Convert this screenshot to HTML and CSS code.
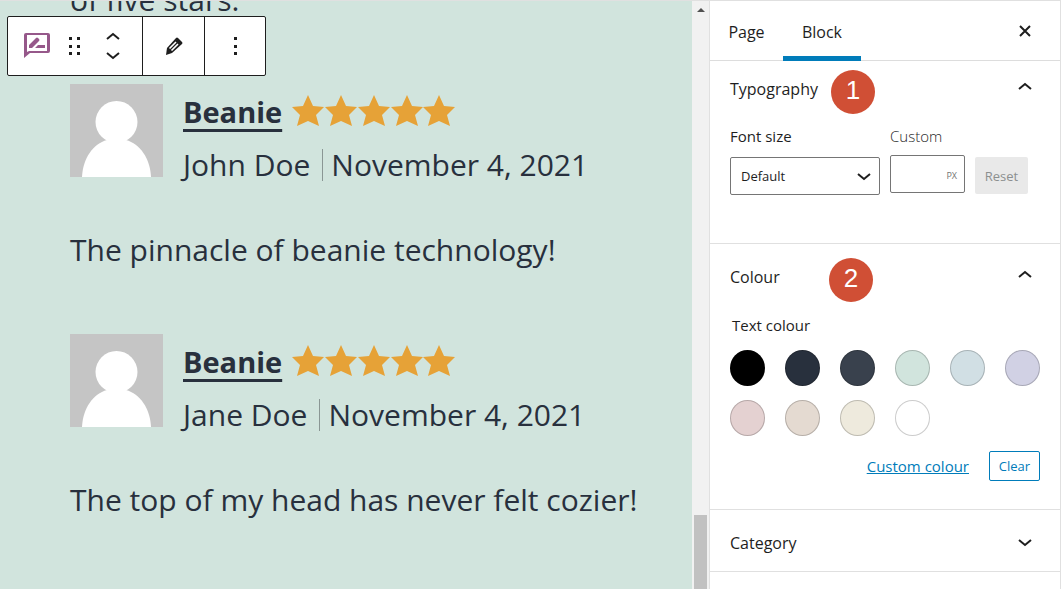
FILE: index.html
```html
<!DOCTYPE html>
<html lang="en">
<head>
  <meta charset="UTF-8">
  <meta name="viewport" content="width=device-width, initial-scale=1">
  <title>Edit Page</title>
  <link rel="stylesheet" href="styles.css">
</head>
<body>
  <!-- shared shapes -->
  <svg class="defs" width="0" height="0" aria-hidden="true">
    <symbol id="stars" viewBox="0 0 164 32">
      <path id="star" fill="#e6a237" d="M16 0l5 11 11 1-8 8 3 11-11-5-11 5 3-11-8-8 11-1z"/>
      <use href="#star" x="33"/>
      <use href="#star" x="66"/>
      <use href="#star" x="99"/>
      <use href="#star" x="131"/>
    </symbol>
    <symbol id="person" viewBox="0 0 93 93">
      <rect width="93" height="93" fill="#c5c5c5"/>
      <circle cx="46.500" cy="38" r="21" fill="#fff"/>
      <path fill="#fff" d="M12 93C13 74 23 60 37 56h19c14 4 24 18 25 37z"/>
    </symbol>
    <symbol id="up" viewBox="0 0 14 8">
      <path d="M1 7l6-5 6 5" fill="none" stroke="#1e1e1e" stroke-width="2"/>
    </symbol>
    <symbol id="down" viewBox="0 0 14 8">
      <path d="M1 1l6 5 6-5" fill="none" stroke="#1e1e1e" stroke-width="2"/>
    </symbol>
  </svg>

  <div class="editor">
    <main class="canvas">
      <div class="toolbar" role="toolbar" aria-label="Block tools">
        <div class="toolbar-group group-main">
          <button aria-label="Reviews by Category">
            <svg width="26" height="26" viewBox="0 0 26 26">
              <path fill="#96588a" fill-rule="evenodd" d="M2 0h22q2 0 2 2v16q0 2-2 2H6l-6 5V2q0-2 2-2zM3 2v17l2-1h18V2z"/>
              <path fill="#96588a" d="M5 15v-3l7-7q1-1 2 0l1 1q1 1 0 2l-7 7zM14 12h7v3H11z"/>
            </svg>
          </button>
          <button aria-label="Drag">
            <svg width="12" height="20" viewBox="0 0 12 20" fill="#1e1e1e">
              <path d="M0 1h3v3H0zM8 1h3v3H8zM0 9h3v3H0zM8 9h3v3H8zM0 16h3v3H0zM8 16h3v3H8z"/>
            </svg>
          </button>
          <div class="movers">
            <button aria-label="Move up"><svg width="14" height="8"><use href="#up"/></svg></button>
            <button aria-label="Move down"><svg width="14" height="8"><use href="#down"/></svg></button>
          </div>
        </div>
        <div class="toolbar-group group-edit">
          <button aria-label="Edit">
            <svg width="18" height="18" viewBox="0 0 18 18">
              <path fill="#1e1e1e" d="M11 1q1-1 2 0l4 4q1 1 0 2L7 16l-6 2 1-7z"/>
              <path d="M4.500 11.500l6.500-6.500M6.500 13.500l6.500-6.500" stroke="#fff" stroke-width="1.600"/>
            </svg>
          </button>
        </div>
        <div class="toolbar-group group-more">
          <button aria-label="Options">
            <svg width="3" height="20" viewBox="0 0 3 20"><path fill="#1e1e1e" d="M0 1h3v3H0zM0 9h3v3H0zM0 16h3v3H0z"/></svg>
          </button>
        </div>
      </div>

      <div class="reviews">
        <article class="review">
          <p>of five stars.</p>
        </article>
        <article class="review">
          <header>
            <svg class="avatar" role="img" aria-label="John Doe"><use href="#person"/></svg>
            <div class="info">
              <div class="product"><a href="#">Beanie</a><svg class="stars" role="img" aria-label="Rated 5 out of 5"><use href="#stars"/></svg></div>
              <div class="meta"><span class="author">John Doe</span><time datetime="2021-11-04">November 4, 2021</time></div>
            </div>
          </header>
          <p>The pinnacle of beanie technology!</p>
        </article>
        <article class="review">
          <header>
            <svg class="avatar" role="img" aria-label="Jane Doe"><use href="#person"/></svg>
            <div class="info">
              <div class="product"><a href="#">Beanie</a><svg class="stars" role="img" aria-label="Rated 5 out of 5"><use href="#stars"/></svg></div>
              <div class="meta"><span class="author">Jane Doe</span><time datetime="2021-11-04">November 4, 2021</time></div>
            </div>
          </header>
          <p>The top of my head has never felt cozier!</p>
        </article>
      </div>
    </main>

    <div class="scrollbar">
      <svg width="8" height="4" viewBox="0 0 8 4"><path fill="#505050" d="M4 0l4 4H0z"/></svg>
      <div class="thumb"></div>
    </div>

    <aside class="sidebar">
      <nav class="tabs">
        <button class="tab">Page</button>
        <button class="tab active">Block</button>
        <button class="close" aria-label="Close settings">
          <svg width="12" height="12" viewBox="0 0 12 12"><path d="M1 1l10 10M11 1L1 11" stroke="#1e1e1e" stroke-width="2"/></svg>
        </button>
      </nav>

      <section class="panel typography">
        <h2><button class="panel-title">Typography <svg width="14" height="8"><use href="#up"/></svg></button></h2>
        <span class="step">1</span>
        <div class="font-row">
          <div class="field field-size">
            <label for="fontSize">Font size</label>
            <div class="select">
              <select id="fontSize">
                <option>Default</option>
                <option>Small</option>
                <option>Large</option>
              </select>
              <svg width="14" height="8"><use href="#down"/></svg>
            </div>
          </div>
          <div class="field field-custom">
            <label for="customSize">Custom</label>
            <div class="unit"><input type="text" id="customSize"><span>PX</span></div>
          </div>
          <button class="reset" disabled>Reset</button>
        </div>
      </section>

      <section class="panel colour">
        <h2><button class="panel-title">Colour <svg width="14" height="8"><use href="#up"/></svg></button></h2>
        <span class="step">2</span>
        <h3>Text colour</h3>
        <div class="swatches">
          <button class="swatch black" aria-label="Black"></button>
          <button class="swatch navy" aria-label="Dark gray"></button>
          <button class="swatch slate" aria-label="Gray"></button>
          <button class="swatch green" aria-label="Green"></button>
          <button class="swatch blue" aria-label="Blue"></button>
          <button class="swatch purple" aria-label="Purple"></button>
          <button class="swatch red" aria-label="Red"></button>
          <button class="swatch orange" aria-label="Orange"></button>
          <button class="swatch yellow" aria-label="Yellow"></button>
          <button class="swatch white" aria-label="White"></button>
        </div>
        <div class="actions">
          <a href="#">Custom colour</a>
          <button class="clear">Clear</button>
        </div>
      </section>

      <section class="panel">
        <h2><button class="panel-title">Category <svg width="14" height="8"><use href="#down"/></svg></button></h2>
      </section>
    </aside>
  </div>
</body>
</html>
```
FILE: styles.css
```css
* {
  box-sizing: border-box;
}
body {
  margin: 0;
  background: #fff;
  color: #1e1e1e;
  font-family: "Open Sans", "Noto Sans", sans-serif;
  font-size: 15px;
}
button, input, select {
  font-family: inherit;
  color: inherit;
}
button {
  padding: 0;
  border: 0;
  background: none;
}
svg {
  display: block;
}
.defs {
  position: absolute;
}
.editor {
  display: flex;
  height: 100vh;
  border-top: 1px solid #e0e0e0;
  overflow: hidden;
}

/* canvas */
.canvas {
  position: relative;
  flex: 1;
  min-width: 0;
  background: #d1e4dd;
  overflow: hidden;
}
.toolbar {
  position: absolute;
  top: 15px;
  left: 7px;
  display: flex;
  height: 60px;
  background: #fff;
  border: 1px solid #1e1e1e;
  border-radius: 2px;
}
.toolbar-group {
  display: flex;
  align-items: center;
  justify-content: center;
}
.toolbar-group + .toolbar-group {
  border-left: 1px solid #1e1e1e;
}
.group-main {
  width: 134px;
  gap: 19px;
  padding-right: 6px;
}
.group-edit {
  width: 62px;
}
.group-more {
  width: 61px;
}
.movers {
  display: flex;
  flex-direction: column;
  gap: 12px;
  margin-left: 6px;
}
.reviews {
  margin-top: -27px;
  padding: 0 20px 0 70px;
  color: #28303d;
  font-size: 30px;
  line-height: 52px;
}
.review {
  margin-bottom: 58px;
}
.review header {
  display: flex;
  gap: 20px;
  margin-bottom: 33px;
}
.review p {
  margin: 0;
  white-space: nowrap;
}
.avatar {
  width: 93px;
  height: 93px;
  flex: none;
}
.info {
  padding-top: 2px;
  white-space: nowrap;
}
.product {
  display: flex;
  align-items: center;
  gap: 10px;
}
.product a {
  color: inherit;
  font-size: 29px;
  font-weight: 700;
  text-decoration: underline;
  text-decoration-thickness: 3px;
  text-underline-offset: 6px;
  text-decoration-skip-ink: none;
}
.stars {
  width: 164px;
  height: 32px;
  margin-bottom: 2px;
}
.meta {
  display: flex;
  align-items: center;
  padding-top: 1px;
}
.meta time {
  margin-left: 12px;
  padding-left: 8px;
  border-left: 1px solid #8a9694;
  line-height: 32px;
}

/* scrollbar */
.scrollbar {
  display: flex;
  flex-direction: column;
  justify-content: space-between;
  align-items: center;
  width: 17px;
  padding-top: 7px;
  background: #f1f1f1;
}
.thumb {
  width: 13px;
  height: 74px;
  background: #c1c1c1;
}

/* sidebar */
.sidebar {
  width: 352px;
  border: solid #e0e0e0;
  border-width: 0 1px;
}
.tabs {
  display: flex;
  height: 60px;
  border-bottom: 1px solid #ddd;
}
.tab {
  width: 73px;
  height: 60px;
  padding-top: 7px;
  font-size: 16px;
  border-bottom: 5px solid transparent;
}
.tab.active {
  width: 78px;
  border-color: #007cba;
}
.close {
  margin: 0 29px 0 auto;
}
.panel {
  position: relative;
  padding: 0 20px;
  border-bottom: 1px solid #e0e0e0;
}
.panel h2 {
  margin: 0;
}
.panel-title {
  display: flex;
  align-items: center;
  justify-content: space-between;
  width: 100%;
  height: 61px;
  padding: 5px 8px 0 0;
  font-size: 16px;
}
.typography .panel-title svg, .colour .panel-title svg {
  margin-bottom: 6px;
}
.step {
  position: absolute;
  top: 9px;
  left: 121px;
  width: 44px;
  height: 44px;
  border-radius: 50%;
  background: #d04f35;
  color: #fff;
  font: 26px/40px "Liberation Sans", sans-serif;
  text-align: center;
}
.typography {
  height: 183px;
}
.typography .panel-title {
  height: 55px;
  padding-top: 0;
}
.font-row {
  display: flex;
  align-items: flex-start;
  gap: 10px;
  padding-top: 10px;
}
.field {
  display: flex;
  flex-direction: column;
  gap: 11px;
}
.field label {
  line-height: 20px;
}
.field-size {
  width: 150px;
}
.field-custom {
  width: 75px;
  gap: 9px;
}
.field-custom label {
  font-weight: 300;
}
.select, .unit {
  position: relative;
}
.select svg {
  position: absolute;
  top: 16px;
  right: 9px;
}
.select select, .unit input {
  display: block;
  width: 100%;
  height: 38px;
  border: 1px solid #757575;
  border-radius: 2px;
  background: #fff;
}
.select select {
  padding: 0 10px;
  appearance: none;
  font-size: 13px;
}
.unit span {
  position: absolute;
  right: 8px;
  top: 14px;
  color: #757575;
  font-size: 9px;
}
.reset {
  width: 53px;
  height: 37px;
  margin-top: 31px;
  border-radius: 2px;
  background: #e9e9e9;
  color: #8c8f8f;
  font-size: 13px;
}
.colour {
  height: 266px;
}
.colour .step {
  top: 14px;
  left: 119px;
}
.panel h3 {
  margin: 10px 2px 15px;
  font-size: 15px;
  font-weight: 400;
  line-height: 20px;
}
.swatches {
  display: grid;
  grid-template-columns: repeat(6, 35px);
  gap: 14px 20px;
}
.swatch {
  height: 36px;
  border: 1px solid rgba(0, 0, 0, 0.2);
  border-radius: 50%;
}
.black { background: #000; }
.navy { background: #28303d; }
.slate { background: #39414d; }
.green { background: #d1e4dd; }
.blue { background: #d1dfe4; }
.purple { background: #d1d1e4; }
.red { background: #e4d1d1; }
.orange { background: #e4dad1; }
.yellow { background: #eeeadd; }
.white { background: #fff; }
.actions {
  display: flex;
  align-items: center;
  justify-content: flex-end;
  gap: 20px;
  padding-top: 15px;
}
.actions a {
  color: #007cba;
  font-size: 15px;
}
.clear {
  width: 51px;
  height: 30px;
  border: 1px solid #007cba;
  border-radius: 2px;
  color: #007cba;
  font-size: 13px;
}
```
